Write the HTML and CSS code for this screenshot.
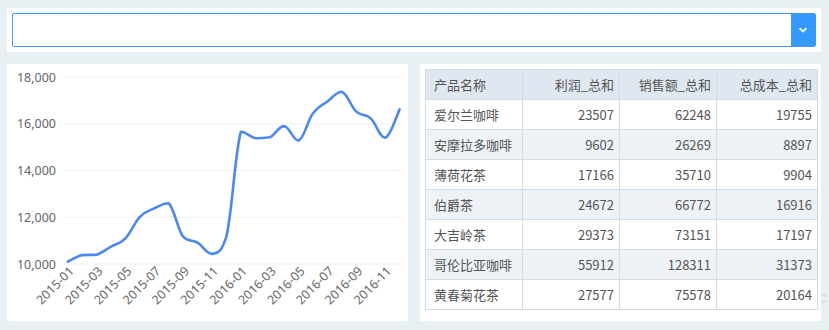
FILE: index.html
```html
<!DOCTYPE html>
<html lang="zh-CN">
<head>
  <meta charset="UTF-8">
  <title>产品销售看板</title>
  <link rel="stylesheet" href="styles.css">
</head>
<body>
  <div class="top">
    <div class="select">
      <div class="select-input"></div>
      <div class="select-btn">
        <svg width="10" height="6" viewBox="0 0 10 6"><path d="M1.5 1.2 L5 4.5 L8.5 1.2" fill="none" stroke="#fff" stroke-width="1.8"/></svg>
      </div>
    </div>
  </div>

  <div class="row">
    <div class="panel chart-panel">
      <svg id="chart" width="401" height="257"></svg>
    </div>
    <div class="panel table-panel">
      <table>
        <colgroup><col class="c1"><col class="c2"><col class="c3"><col class="c4"></colgroup>
        <thead>
          <tr><th class="name">产品名称</th><th>利润_总和</th><th>销售额_总和</th><th>总成本_总和</th></tr>
        </thead>
        <tbody>
          <tr><td class="name">爱尔兰咖啡</td><td>23507</td><td>62248</td><td>19755</td></tr>
          <tr><td class="name">安摩拉多咖啡</td><td>9602</td><td>26269</td><td>8897</td></tr>
          <tr><td class="name">薄荷花茶</td><td>17166</td><td>35710</td><td>9904</td></tr>
          <tr><td class="name">伯爵茶</td><td>24672</td><td>66772</td><td>16916</td></tr>
          <tr><td class="name">大吉岭茶</td><td>29373</td><td>73151</td><td>17197</td></tr>
          <tr><td class="name">哥伦比亚咖啡</td><td>55912</td><td>128311</td><td>31373</td></tr>
          <tr><td class="name">黄春菊花茶</td><td>27577</td><td>75578</td><td>20164</td></tr>
        </tbody>
      </table>
      <svg class="scroll-hint" width="7" height="13" viewBox="0 0 7 13"><path d="M1 4.5 L3.5 2 L6 4.5 M1 8.5 L3.5 11 L6 8.5" fill="none" stroke="#c4c9ce" stroke-width="1"/></svg>
    </div>
  </div>

  <script src="script.js"></script>
</body>
</html>
```

FILE: styles.css
```css
body {
  margin: 0;
  padding: 8px 8px 0 7px;
  background: #e8f0f4;
  font-family: "Noto Sans CJK SC", "Noto Sans", sans-serif;
  color: #555;
}
.top {
  width: 804px;
  height: 34px;
  padding: 5px;
  background: #fff;
}
.select {
  display: flex;
  height: 34px;
  box-sizing: border-box;
  border: 1px solid #3d9bf6;
  border-radius: 2px;
}
.select-input {
  flex: 1;
}
.select-btn {
  width: 24px;
  background: #3399ff;
  display: flex;
  align-items: center;
  justify-content: center;
}
.row {
  display: flex;
  gap: 12px;
  margin-top: 12px;
}
.panel {
  width: 401px;
  height: 257px;
  background: #fff;
}
.chart-panel svg {
  display: block;
}
.table-panel {
  position: relative;
  box-sizing: border-box;
  padding: 5px 0 0 5px;
}
table {
  border-collapse: collapse;
  font-size: 13px;
  table-layout: fixed;
  width: 392px;
}
col.c1, col.c2, col.c3 {
  width: 97px;
}
col.c4 {
  width: 101px;
}
th, td {
  border: 1px solid #d3dbe3;
  height: 29px;
  padding: 0 5px 0 8px;
  text-align: right;
  font-weight: normal;
  white-space: nowrap;
}
th {
  background: #dfe7f0;
}
.name {
  text-align: left;
}
tbody tr:nth-child(even) td {
  background: #edf2f7;
}
.scroll-hint {
  position: absolute;
  left: 400px;
  top: 228px;
}
.axis text {
  font-family: "Noto Sans", sans-serif;
  font-size: 12.5px;
  fill: #666;
}
```

FILE: script.js
```js
var data = [10100, 10380, 10400, 10740, 11100, 12020, 12380, 12600, 11170, 10910, 10430, 11170,
            15660, 15380, 15420, 15900, 15280, 16450, 16950, 17370, 16520, 16230, 15400, 16620];

var svg = document.getElementById('chart');
var NS = 'http://www.w3.org/2000/svg';
var x0 = 60.7, step = 14.43;
var yBase = 200, perUnit = 46.75 / 2000;

function yOf(v) { return yBase - (v - 10000) * perUnit; }

function el(tag, attrs, parent) {
  var e = document.createElementNS(NS, tag);
  for (var k in attrs) e.setAttribute(k, attrs[k]);
  (parent || svg).appendChild(e);
  return e;
}

function clamp(v, a, b) {
  return Math.max(Math.min(a, b), Math.min(Math.max(a, b), v));
}

var axis = el('g', { 'class': 'axis' });

// grid + y labels
for (var v = 10000; v <= 18000; v += 2000) {
  var y = yOf(v);
  el('line', { x1: 55, x2: 395, y1: y, y2: y, stroke: '#eef0f2', 'stroke-width': 1 }, axis);
  var t = el('text', { x: 49, y: y + 4.5, 'text-anchor': 'end' }, axis);
  t.textContent = v.toLocaleString('en-US');
}

// x labels, every other month
for (var i = 0; i < data.length; i += 2) {
  var year = 2015 + Math.floor(i / 12);
  var m = (i % 12) + 1;
  var label = year + '-' + (m < 10 ? '0' + m : m);
  var lx = x0 + i * step + 7;
  var tx = el('text', { 'text-anchor': 'end', transform: 'translate(' + lx + ',208) rotate(-45)' }, axis);
  tx.textContent = label;
}

// smooth line, control points kept inside each segment's range
var pts = data.map(function (v, i) { return [x0 + i * step, yOf(v)]; });
var d = 'M' + pts[0][0] + ' ' + pts[0][1];
for (var j = 0; j < pts.length - 1; j++) {
  var p0 = pts[j - 1] || pts[j];
  var p1 = pts[j];
  var p2 = pts[j + 1];
  var p3 = pts[j + 2] || p2;
  var s = 5;
  var c1x = p1[0] + (p2[0] - p0[0]) / s, c1y = clamp(p1[1] + (p2[1] - p0[1]) / s, p1[1], p2[1]);
  var c2x = p2[0] - (p3[0] - p1[0]) / s, c2y = clamp(p2[1] - (p3[1] - p1[1]) / s, p1[1], p2[1]);
  d += ' C' + c1x.toFixed(1) + ' ' + c1y.toFixed(1) + ' ' + c2x.toFixed(1) + ' ' + c2y.toFixed(1) + ' ' + p2[0].toFixed(1) + ' ' + p2[1].toFixed(1);
}
el('path', { d: d, fill: 'none', stroke: '#4b89f1', 'stroke-width': 2.6, 'stroke-linejoin': 'round', 'stroke-linecap': 'round' });
```
